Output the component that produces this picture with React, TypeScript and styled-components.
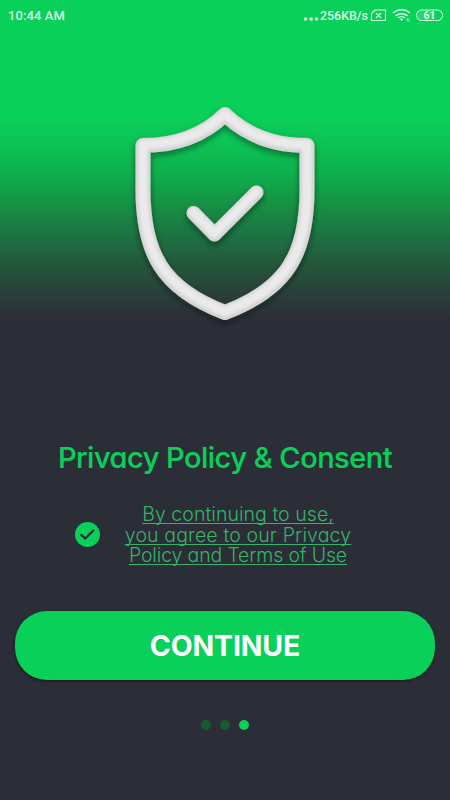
import React from "react";
import styled, { createGlobalStyle } from "styled-components";

const GREEN = "#09d059";
const DARK = "#2b2d37";

const Global = createGlobalStyle`
  * { box-sizing: border-box; }
  html, body { margin: 0; background: ${DARK}; }
`;

const Screen = styled.main`
  width: 450px;
  height: 800px;
  overflow: hidden;
  display: flex;
  flex-direction: column;
  align-items: center;
  font-family: Inter, "Open Sans", sans-serif;
  font-feature-settings: "cv11" 1;
  background: linear-gradient(
    180deg,
    ${GREEN} 0, ${GREEN} 118px, #0cc254 145px, #0fae4d 175px, #168f44 207px,
    #1c7643 232px, #235b3c 260px, #29443a 288px, #2b3438 310px, ${DARK} 325px
  );
`;

const StatusBar = styled.header`
  width: 100%;
  height: 32px;
  padding: 0 4px 0 8px;
  display: flex;
  align-items: center;
  justify-content: space-between;
  color: #d8ffe6;
  font: 500 13px/32px Roboto, sans-serif;
`;

const Clock = styled.span`
  letter-spacing: 0.08px;
`;

const Indicators = styled.div`
  display: flex;
  align-items: center;
  height: 32px;
`;

const Speed = styled.span`
  font-size: 12.4px;
  margin-left: 1px;
  margin-right: 2px;
`;

const Shield = styled.svg`
  display: block;
  flex: none;
  width: 210px;
  height: 248px;
  margin-top: 58px;
  overflow: visible;
`;

const Title = styled.h1`
  margin: 101px 0 0;
  height: 38px;
  color: ${GREEN};
  font-size: 29px;
  line-height: 38px;
  font-weight: 500;
  letter-spacing: -0.5px;
  -webkit-text-stroke: 0.2px ${GREEN};
  white-space: nowrap;
`;

const Consent = styled.div`
  width: 450px;
  height: 64px;
  margin-top: 26px;
  padding-left: 75px;
  display: flex;
  align-items: center;
`;

const CheckBadge = styled.svg`
  width: 25px;
  height: 25px;
  margin-bottom: 2px;
`;

const Terms = styled.a`
  width: 240px;
  margin-left: 18px;
  color: #35b369;
  font-size: 19.5px;
  line-height: 20.5px;
  font-weight: 300;
  text-align: center;
  text-decoration: underline;
  text-decoration-thickness: 1px;
  text-underline-offset: 2px;
  text-decoration-skip-ink: none;
`;

const Line = styled.span<{ $spacing: number }>`
  display: block;
  white-space: nowrap;
  letter-spacing: ${(p) => p.$spacing}px;
`;

const Continue = styled.button`
  width: 420px;
  height: 69px;
  margin-top: 44px;
  padding: 0;
  flex: none;
  border: 0;
  border-radius: 32px;
  background: ${GREEN};
  box-shadow: 0 1px 3px rgba(0, 0, 0, 0.5);
  color: #fff;
  font: 700 28.5px/70px Inter, sans-serif;
  letter-spacing: -0.15px;
`;

const Pager = styled.div`
  display: flex;
  gap: 9px;
  margin-top: 40px;
`;

const Dot = styled.i<{ $active?: boolean }>`
  width: 10px;
  height: 10px;
  border-radius: 50%;
  background: ${(p) => (p.$active ? GREEN : "#155c32")};
`;

const SHIELD =
  "M225 114.5C203 136 176 145.5 143 145.5V185C142 254 163 289 225 312.5C287 289 308 254 307 185V145.5C274 145.5 247 136 225 114.5Z";
const CHECK = "M193.5 213L214.5 234.5L256.5 192.5";

function ShieldArt() {
  return (
    <Shield viewBox="120 90 210 248" fill="none" strokeLinecap="round" strokeLinejoin="round">
      <defs>
        <filter id="cast" x="-20%" y="-20%" width="140%" height="140%">
          <feDropShadow dx="0" dy="3" stdDeviation="3" floodColor="#00180a" floodOpacity="0.5" />
        </filter>
        <filter id="soft" x="-10%" y="-10%" width="120%" height="120%">
          <feGaussianBlur stdDeviation="1.5" />
        </filter>
      </defs>
      <g stroke="#d3d3d3" filter="url(#cast)">
        <path d={SHIELD} strokeWidth="15" />
        <path d={CHECK} strokeWidth="14" />
      </g>
      <g stroke="#eaeaea" strokeWidth="9.5" filter="url(#soft)" transform="translate(0 -1)">
        <path d={SHIELD} />
        <path d={CHECK} />
      </g>
    </Shield>
  );
}

export default function App() {
  return (
    <>
      <Global />
      <Screen>
        <StatusBar>
          <Clock>10:44 AM</Clock>
          <Indicators>
            <svg width="16" height="16" fill="#d8ffe6">
              <circle cx="2.5" cy="11" r="1.8" />
              <circle cx="8.1" cy="11" r="1.8" />
              <circle cx="13.5" cy="11" r="1.8" />
            </svg>
            <Speed>256KB/s</Speed>
            <svg width="76" height="18" viewBox="370 7 76 18" fill="none" stroke="#d8ffe6">
              <path d="M375 10H385.5V20.5H371.5V13.5Z" strokeWidth="1.1" />
              <path d="M376 13L381 18M381 13L376 18" strokeWidth="1.2" />
              <path d="M393 13C398 8.6 405 8.6 410 13M395.5 15.8C399 12.9 404 12.9 407.5 15.8M398 18C400 16.2 403 16.2 405 18" strokeWidth="1.5" />
              <path d="M399.5 19.2Q401.5 17.7 403.5 19.2L401.5 21Z" fill="#d8ffe6" stroke="none" />
              <path d="M407.2 18V21.5M409 18.5V22" strokeWidth="0.7" />
              <rect x="416.5" y="10" width="26" height="10.5" rx="5.2" strokeWidth="1" />
              <path d="M417 11H434V20H421Q417 20 417 15Z" fill="#ffffff" fillOpacity="0.12" stroke="none" />
              <text x="429.5" y="19.2" textAnchor="middle" fill="#d8ffe6" stroke="none" fontFamily="Roboto, sans-serif" fontSize="10.5" fontWeight="700">61</text>
            </svg>
          </Indicators>
        </StatusBar>
        <ShieldArt />
        <Title>Privacy Policy &amp; Consent</Title>
        <Consent>
          <CheckBadge viewBox="0 0 25 25" fill="none">
            <circle cx="12.5" cy="12.5" r="12.5" fill={GREEN} />
            <path d="M6.3 13L10.3 16.6L18.3 8.4" stroke={DARK} strokeWidth="2.2" strokeLinecap="round" strokeLinejoin="round" />
          </CheckBadge>
          <Terms>
            <Line $spacing={0.05}>By continuing to use,</Line>
            <Line $spacing={0.14}>you agree to our Privacy</Line>
            <Line $spacing={-0.15}>Policy and Terms of Use</Line>
          </Terms>
        </Consent>
        <Continue>CONTINUE</Continue>
        <Pager>
          <Dot />
          <Dot />
          <Dot $active />
        </Pager>
      </Screen>
    </>
  );
}
